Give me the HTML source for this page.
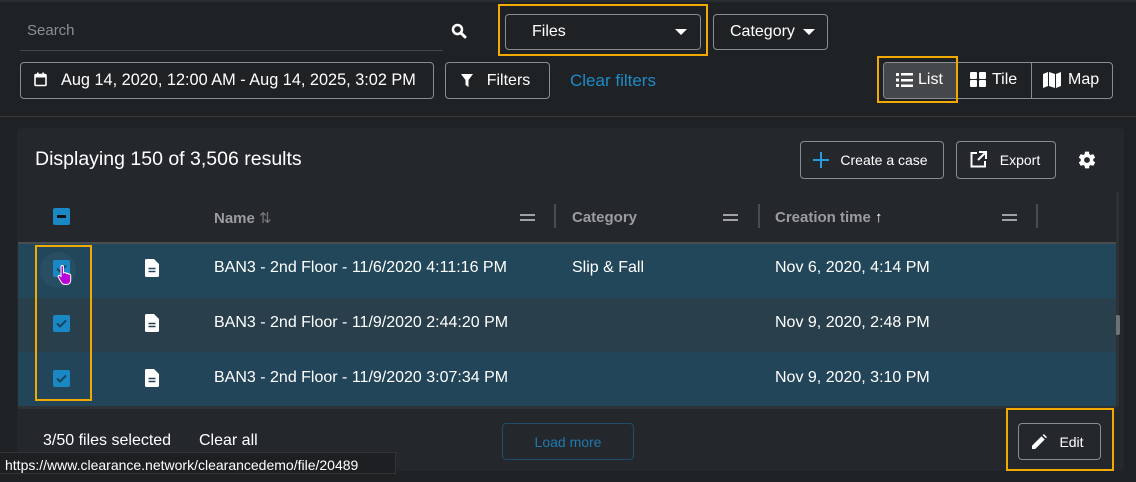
<!DOCTYPE html>
<html><head><meta charset="utf-8"><style>
*{box-sizing:border-box;margin:0;padding:0}
body{width:1136px;height:482px;background:#1f2225;font-family:"Liberation Sans",Arial,sans-serif;color:#fff;position:relative;overflow:hidden;font-size:15px}
.a{position:absolute}
.btn{position:absolute;border:1px solid #8a8d90;border-radius:4px;display:flex;align-items:center;justify-content:center;color:#fff;font-size:16px}
.hl{position:absolute;border:2px solid #f2a900}
.cb{position:absolute;width:17px;height:17px;background:#1a88c4;border-radius:2px}
.row{position:absolute;left:18px;width:1098px;height:54px}
.txt{position:absolute;font-size:16px;color:#fff}
.hd{position:absolute;top:209px;font-size:15px;color:#9a9c9f;font-weight:bold}
.eq{position:absolute;top:214px;width:15px;height:7px;border-top:2px solid #a0a2a5;border-bottom:2px solid #a0a2a5}
.vs{position:absolute;top:204px;width:2px;height:24px;background:#4a4d50}
</style></head><body>
<div class="a" style="left:0;top:0;width:1136px;height:2px;background:#2a2d30"></div>
<div class="txt" style="left:27px;top:22px;color:#8c8f92;font-size:15px">Search</div>
<div class="a" style="left:20px;top:50px;width:423px;height:1px;background:#44474a"></div>
<svg class="a" style="left:451px;top:23px" width="16" height="16" viewBox="0 0 16 16"><circle cx="6.5" cy="6.5" r="4.5" stroke="#fff" stroke-width="2.5" fill="none"/><path d="M10 10l4 4" stroke="#fff" stroke-width="3" stroke-linecap="round"/></svg>
<div class="btn" style="left:505px;top:14px;width:196px;height:36px;justify-content:flex-start;padding-left:26px">Files</div>
<svg class="a" style="left:675px;top:28px" width="12" height="8"><path d="M0 1h12L6 7z" fill="#fff"/></svg>
<div class="hl" style="left:498px;top:4px;width:210px;height:52px"></div>
<div class="btn" style="left:713px;top:14px;width:115px;height:36px;justify-content:flex-start;padding-left:16px">Category</div>
<svg class="a" style="left:803px;top:28px" width="12" height="8"><path d="M0 1h12L6 7z" fill="#fff"/></svg>
<div class="btn" style="left:20px;top:62px;width:414px;height:37px;justify-content:flex-start;padding-left:40px;font-size:16.3px">Aug 14, 2020, 12:00 AM - Aug 14, 2025, 3:02 PM</div>
<svg class="a" style="left:34px;top:72px" width="13" height="15" viewBox="0 0 13 15"><rect x="1" y="2.5" width="11" height="11" rx="1" fill="none" stroke="#fff" stroke-width="1.6"/><rect x="1" y="2.5" width="11" height="3" fill="#fff"/><rect x="3" y="0.5" width="1.6" height="3" fill="#fff"/><rect x="8.4" y="0.5" width="1.6" height="3" fill="#fff"/></svg>
<div class="btn" style="left:445px;top:62px;width:105px;height:37px;padding-left:22px">Filters</div>
<svg class="a" style="left:461px;top:74px" width="12" height="13"><path d="M0 0h12L7.5 6v7L4.5 11V6z" fill="#fff"/></svg>
<div class="txt" style="left:570px;top:71px;color:#1e8ac8;font-size:17px">Clear filters</div>
<div class="a" style="left:883px;top:62px;width:230px;height:37px;border:1px solid #8a8d90;border-radius:4px"></div>
<div class="a" style="left:884px;top:63px;width:73px;height:35px;background:#45484b;border-radius:3px 0 0 3px"></div>
<div class="a" style="left:957px;top:63px;width:1px;height:35px;background:#8a8d90"></div>
<div class="a" style="left:1031px;top:63px;width:1px;height:35px;background:#8a8d90"></div>
<svg class="a" style="left:896px;top:72px" width="17" height="16"><g fill="#fff"><rect x="0" y="1" width="3" height="3"/><rect x="5" y="1" width="12" height="2.5"/><rect x="0" y="6.5" width="3" height="3"/><rect x="5" y="7" width="12" height="2.5"/><rect x="0" y="12" width="3" height="3"/><rect x="5" y="12.5" width="12" height="2.5"/></g></svg>
<div class="txt" style="left:918px;top:71px">List</div>
<svg class="a" style="left:970px;top:72px" width="16" height="15"><g fill="#fff"><rect x="0" y="0" width="7" height="7" rx="1"/><rect x="9" y="0" width="7" height="7" rx="1"/><rect x="0" y="8" width="7" height="7" rx="1"/><rect x="9" y="8" width="7" height="7" rx="1"/></g></svg>
<div class="txt" style="left:992px;top:71px">Tile</div>
<svg class="a" style="left:1043px;top:72px" width="18" height="16"><path d="M0 2l5-2v14L0 16zM6 0l6 2v14l-6-2zM13 2l5-2v14l-5 2z" fill="#fff"/></svg>
<div class="txt" style="left:1068px;top:71px">Map</div>
<div class="hl" style="left:877px;top:56px;width:81px;height:47px"></div>
<div class="a" style="left:0;top:116px;width:1136px;height:1px;background:#3a3633"></div>
<div class="a" style="left:17px;top:128px;width:1107px;height:343px;background:#24272b;border-radius:4px"></div>
<div class="txt" style="left:35px;top:148px;font-size:19.5px">Displaying 150 of 3,506 results</div>
<div class="btn" style="left:800px;top:141px;width:144px;height:38px;font-size:14px;padding-left:24px">Create a case</div>
<svg class="a" style="left:813px;top:152px" width="16" height="16"><path d="M8 0v16M0 8h16" stroke="#2b9be0" stroke-width="2"/></svg>
<div class="btn" style="left:956px;top:141px;width:100px;height:38px;font-size:14px;padding-left:28px">Export</div>
<svg class="a" style="left:970px;top:151px" width="17" height="17"><path d="M7 2H1.5v13.5H15V10" stroke="#fff" stroke-width="2" fill="none"/><path d="M9 1h7v7M16 1l-8 8" stroke="#fff" stroke-width="2" fill="none"/></svg>
<svg class="a" style="left:1077px;top:150px" width="20" height="20" viewBox="0 0 24 24"><path fill="#fff" d="M19.4 13c.04-.32.06-.66.06-1s-.02-.68-.07-1l2.1-1.650c.2-.15.24-.42.12-.64l-2-3.46c-.12-.22-.4-.3-.6-.22l-2.5 1c-.52-.4-1.080-.73-1.700-.98l-.37-2.650A.5.5 0 0 0 14 2h-4a.5.5 0 0 0-.5.42l-.37 2.650c-.62.25-1.180.58-1.700.98l-2.500-1c-.22-.08-.48 0-.6.22l-2 3.460c-.13.22-.07.5.12.64L4.570 11c-.04.32-.07.66-.07 1s.02.68.07 1l-2.100 1.650c-.2.15-.25.42-.13.64l2 3.460c.12.22.4.3.6.22l2.500-1c.52.4 1.080.73 1.700.98l.37 2.650c.05.24.25.42.5.42h4c.25 0 .45-.18.49-.42l.37-2.650c.62-.25 1.180-.58 1.700-.98l2.500 1c.22.08.48 0 .6-.22l2-3.460c.12-.22.07-.5-.12-.64zM12 15.5A3.5 3.5 0 1 1 12 8.5a3.5 3.5 0 0 1 0 7z"/></svg>
<div class="cb" style="left:53px;top:208px"><div class="a" style="left:4px;top:7px;width:9px;height:2.5px;background:#111"></div></div>
<div class="hd" style="left:214px">Name <span style="font-weight:normal;color:#777">⇅</span></div>
<div class="eq" style="left:520px"></div><div class="vs" style="left:554px"></div>
<div class="hd" style="left:572px">Category</div>
<div class="eq" style="left:723px"></div><div class="vs" style="left:758px"></div>
<div class="hd" style="left:775px">Creation time <span style="color:#fff">↑</span></div>
<div class="eq" style="left:1002px"></div><div class="vs" style="left:1036px"></div>
<div class="a" style="left:18px;top:242px;width:1098px;height:2px;background:#4a4d50"></div>
<div class="a" style="left:1116px;top:192px;width:3px;height:215px;background:#2e3135"></div>
<div class="a" style="left:1115px;top:315px;width:5px;height:20px;background:#6f7275;border-radius:2px"></div>
<div class="row" style="top:244px;background:#22475a"></div>
<div class="row" style="top:298px;background:#293f4b"></div>
<div class="row" style="top:352px;background:#23455a;height:54px"></div>
<div class="a" style="left:40px;top:252px;width:36px;height:36px;border-radius:50%;background:#274e63"></div>
<svg class="a" style="left:53px;top:260px" width="17" height="17"><rect width="17" height="17" rx="2" fill="#1a88c4"/><path d="M4 8.5l3 3 6-6" stroke="#17445e" stroke-width="2" fill="none"/></svg>
<svg class="a" style="left:53px;top:315px" width="17" height="17"><rect width="17" height="17" rx="2" fill="#1a88c4"/><path d="M4 8.5l3 3 6-6" stroke="#17445e" stroke-width="2" fill="none"/></svg>
<svg class="a" style="left:53px;top:370px" width="17" height="17"><rect width="17" height="17" rx="2" fill="#1a88c4"/><path d="M4 8.5l3 3 6-6" stroke="#17445e" stroke-width="2" fill="none"/></svg>
<svg class="a" style="left:57px;top:264px" width="16" height="24"><path d="M5 1.5c1 0 1.5.6 1.5 1.5v6l1-.3c1-.3 1.8.3 2 .8 1-.4 2 .1 2.2.7 1-.3 2 .3 2 1.2v5c0 2-1.5 4-3.5 4H7.5c-1.3 0-2.3-.7-3-1.8L1.2 13c-.5-1 .5-2 1.5-1.5l1.3 1V3c0-.9.5-1.5 1-1.5z" fill="#b900d8" stroke="#fff" stroke-width="1"/></svg>
<div class="hl" style="left:35px;top:245px;width:57px;height:156px"></div>
<svg class="a" style="left:145px;top:259px" width="14" height="18"><path d="M1.5 0H9l5 5v11.5a1.5 1.5 0 0 1-1.5 1.5h-11A1.5 1.5 0 0 1 0 16.5v-15A1.5 1.5 0 0 1 1.5 0z" fill="#fff"/><path d="M3.5 9.5h7M3.5 12.5h7" stroke="#22475a" stroke-width="1.6"/></svg>
<svg class="a" style="left:145px;top:314px" width="14" height="18"><path d="M1.5 0H9l5 5v11.5a1.5 1.5 0 0 1-1.5 1.5h-11A1.5 1.5 0 0 1 0 16.5v-15A1.5 1.5 0 0 1 1.5 0z" fill="#fff"/><path d="M3.5 9.5h7M3.5 12.5h7" stroke="#293f4b" stroke-width="1.6"/></svg>
<svg class="a" style="left:145px;top:369px" width="14" height="18"><path d="M1.5 0H9l5 5v11.5a1.5 1.5 0 0 1-1.5 1.5h-11A1.5 1.5 0 0 1 0 16.5v-15A1.5 1.5 0 0 1 1.5 0z" fill="#fff"/><path d="M3.5 9.5h7M3.5 12.5h7" stroke="#23455a" stroke-width="1.6"/></svg>
<div class="txt" style="left:214px;top:259px">BAN3 - 2nd Floor - 11/6/2020 4:11:16 PM</div>
<div class="txt" style="left:572px;top:259px">Slip &amp; Fall</div>
<div class="txt" style="left:775px;top:259px">Nov 6, 2020, 4:14 PM</div>
<div class="txt" style="left:214px;top:314px">BAN3 - 2nd Floor - 11/9/2020 2:44:20 PM</div>
<div class="txt" style="left:775px;top:314px">Nov 9, 2020, 2:48 PM</div>
<div class="txt" style="left:214px;top:369px">BAN3 - 2nd Floor - 11/9/2020 3:07:34 PM</div>
<div class="txt" style="left:775px;top:369px">Nov 9, 2020, 3:10 PM</div>
<div class="a" style="left:18px;top:406px;width:1098px;height:3px;background:#2e3135"></div>
<div class="txt" style="left:43px;top:432px">3/50 files selected</div>
<div class="txt" style="left:199px;top:432px">Clear all</div>
<div class="btn" style="left:502px;top:423px;width:132px;height:37px;border-color:#1f4f68;color:#1e7ab0;font-size:14px">Load more</div>
<div class="btn" style="left:1018px;top:423px;width:83px;height:37px;font-size:14px;padding-left:24px">Edit</div>
<svg class="a" style="left:1032px;top:434px" width="15" height="15"><path d="M0 15v-3.2L9.5 2.3l3.2 3.2L3.2 15zM10.7 1.1l1.1-1.1 3.2 3.2-1.1 1.1z" fill="#fff"/></svg>
<div class="hl" style="left:1006px;top:408px;width:108px;height:63px"></div>
<div class="a" style="left:0;top:452px;width:396px;height:22px;background:#1d1f22;border:1px solid #333;border-left:none;font-size:14px;padding:4px 0 0 5px">https://www.clearance.network/clearancedemo/file/20489</div>
</body></html>
